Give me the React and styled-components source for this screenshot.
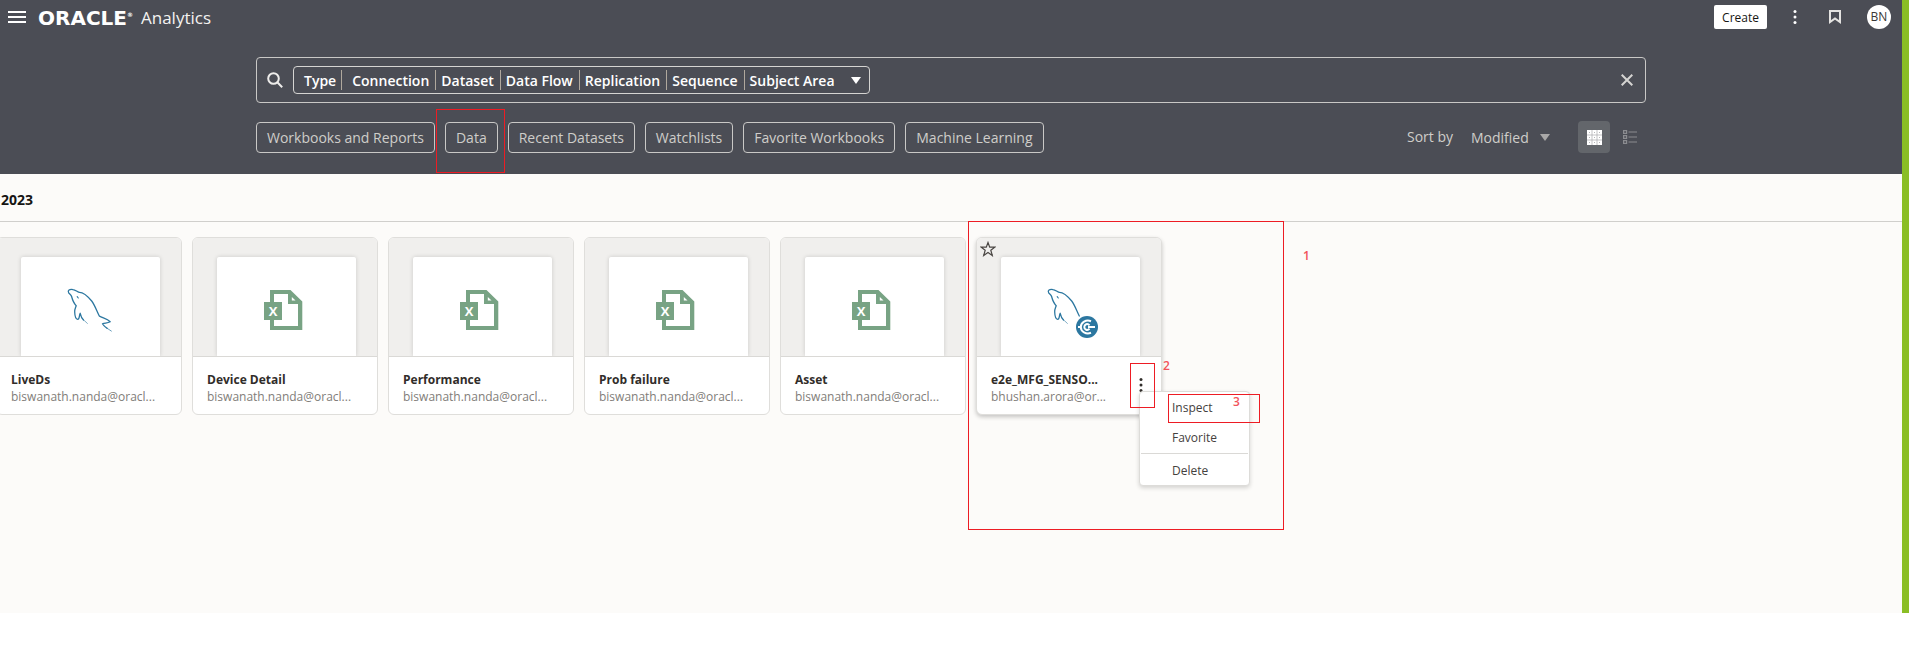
import React from 'react';
import styled, { createGlobalStyle, css } from 'styled-components';

const GlobalStyle = createGlobalStyle`
  * { box-sizing: border-box; }
  body {
    margin: 0;
    background: #fff;
    color: #161513;
    font: 12px/18px "Open Sans", "Noto Sans", sans-serif;
  }
  button, input, select { font: inherit; color: inherit; }
`;

const Page = styled.div`
  margin-right: 8px;
  border-right: 7px solid #8abe25;
  background: #fcfbf9;
  overflow: hidden;
`;

const Header = styled.header`
  background: #4b4d55;
  color: #fff;
  padding-bottom: 21px;
`;

const TopBar = styled.div`
  display: flex;
  align-items: center;
  justify-content: space-between;
  height: 34px;
  padding: 0 11px 0 8px;
`;

const Brand = styled.div`
  display: flex;
  align-items: center;
`;

const Wordmark = styled.span`
  margin-left: 12px;
  padding-top: 2px;
  font: bold 20px/24px "DejaVu Sans", sans-serif;
`;

const Registered = styled.sup`
  font-size: 6px;
  line-height: 6px;
  vertical-align: 8px;
`;

const Product = styled.span`
  margin-left: 8px;
  padding-top: 2px;
  font-size: 17px;
  line-height: 24px;
  color: #f4f3f1;
`;

const TopActions = styled.div`
  display: flex;
  align-items: center;
`;

const IconButton = styled.button`
  display: flex;
  align-items: center;
  justify-content: center;
  flex: none;
  width: ${(p) => p.$size || 24}px;
  height: ${(p) => p.$size || 24}px;
  padding: 0;
  border: 0;
  border-radius: 4px;
  color: ${(p) => p.$color || '#fff'};
  background: ${(p) => (p.$active ? '#63666b' : 'transparent')};
`;

const CreateButton = styled.button`
  height: 24px;
  padding: 2px 8px 0;
  border: 0;
  border-radius: 2px;
  background: #fff;
  color: #161513;
`;

const Tools = styled.div`
  display: flex;
  align-items: center;
  gap: 16px;
  margin: 0 20px 0 16px;
`;

const Avatar = styled.button`
  width: 24px;
  height: 24px;
  padding: 0;
  border: 0;
  border-radius: 50%;
  background: #fff;
  color: #3a3836;
`;

const Centered = styled.div`
  width: calc(100% - 512px);
  min-width: 1180px;
  margin: 23px auto 0;
`;

const SearchBar = styled.div`
  display: flex;
  align-items: center;
  height: 46px;
  padding: 0 6px 0 10px;
  border: 1px solid #c9c8c6;
  border-radius: 4px;
`;

const FilterChip = styled.button`
  display: flex;
  align-items: center;
  height: 28px;
  margin-left: 10px;
  padding: 0 8px 0 10px;
  border: 1px solid #d5d4d2;
  border-radius: 4px;
  background: transparent;
  font-size: 14px;
  font-weight: 600;
  color: #fff;
`;

const Facet = styled.span`
  display: flex;
  align-items: center;
  height: 20px;
  padding: 2px 6px 0 5px;
  border-left: 1px solid #b0a89d;
  &:first-child { padding-left: 0; padding-right: 5px; border-left: 0; }
  &:nth-child(2) { padding-left: 10px; }
  &:last-of-type { padding-right: 16px; }
`;

const SearchInput = styled.input`
  flex: 1;
  min-width: 0;
  height: 28px;
  padding: 0 8px;
  border: 0;
  outline: 0;
  background: transparent;
  font-size: 14px;
`;

const ToolRow = styled.div`
  display: flex;
  align-items: center;
  justify-content: space-between;
  margin-top: 18px;
  height: 32px;
`;

const Pills = styled.div`
  display: flex;
  gap: 10px;
`;

const Pill = styled.button`
  position: relative;
  height: 31px;
  padding: 2px 10px 0;
  border: 1px solid #c9c8c6;
  border-radius: 4px;
  background: transparent;
  font-size: 14px;
  color: #cfcdca;
  white-space: nowrap;
`;

const ViewTools = styled.div`
  display: flex;
  align-items: center;
  color: #cfcdca;
  font-size: 14px;
`;

const SortLabel = styled.label`
  margin-right: 18px;
`;

const SortSelect = styled.select`
  appearance: none;
  width: 69px;
  padding: 2px 0 0;
  border: 0;
  background: transparent;
`;

const Views = styled.div`
  display: flex;
  align-items: center;
  gap: 4px;
  margin-left: 28px;
`;

const SectionTitle = styled.h2`
  margin: 0;
  padding: 16px 1px 11px;
  border-bottom: 1px solid #d0cfcc;
  font-size: 14px;
  line-height: 20px;
  font-weight: 700;
`;

const Cards = styled.div`
  display: flex;
  gap: 10px;
  margin-left: -4px;
  padding: 15px 0 198px;
`;

const CardBox = styled.article`
  position: relative;
  flex: none;
  width: 186px;
  height: 178px;
  border: 1px solid #dfdedb;
  border-radius: 6px;
  background: #fff;
  ${(p) => p.$raised && css`box-shadow: 0 2px 4px rgba(0, 0, 0, 0.22);`}
`;

const Preview = styled.div`
  display: flex;
  justify-content: center;
  height: 119px;
  padding: 19px 0 0 2px;
  border-bottom: 1px solid #dad9d6;
  border-radius: 5px 5px 0 0;
  background: #f0efed;
  overflow: hidden;
`;

const Sheet = styled.div`
  display: flex;
  justify-content: center;
  width: 139px;
  padding-top: 29px;
  border-radius: 2px 2px 0 0;
  background: #fff;
  box-shadow: 0 0 4px rgba(0, 0, 0, 0.16);
`;

const Caption = styled.div`
  padding: 14px 14px 0;
`;

const CardTitle = styled.h3`
  margin: 0;
  font-size: 12px;
  line-height: 18px;
  font-weight: 700;
  color: #312d2a;
`;

const Owner = styled.p`
  margin: 0;
  line-height: 16px;
  color: #817d79;
`;

const StarButton = styled(IconButton)`
  position: absolute;
  left: -1px;
  top: -1px;
`;

const MoreButton = styled(IconButton)`
  position: absolute;
  left: 152px;
  top: 135px;
`;

const Menu = styled.div`
  position: absolute;
  left: 162px;
  top: 153px;
  width: 111px;
  border: 1px solid #dddcd9;
  border-radius: 4px;
  background: #fff;
  box-shadow: 0 2px 4px rgba(0, 0, 0, 0.16);
`;

const MenuItem = styled.button`
  display: block;
  width: 100%;
  height: 30px;
  padding: 2px 0 0 32px;
  border: 0;
  background: transparent;
  color: #45413e;
  text-align: left;
`;

const MenuRule = styled.hr`
  margin: 1px 1px;
  border: 0;
  border-top: 1px solid #dad9d6;
`;

const Callout = styled.span`
  position: absolute;
  left: ${(p) => p.$x}px;
  top: ${(p) => p.$y}px;
  width: ${(p) => p.$w}px;
  height: ${(p) => p.$h}px;
  border: 1px solid #ed1c24;
  pointer-events: none;
`;

const Step = styled.span`
  position: absolute;
  left: ${(p) => p.$x}px;
  top: ${(p) => p.$y}px;
  font-weight: 600;
  color: #f2525a;
`;

const Caret = ({ color = 'currentColor' }) => (
  <svg width="10" height="7" viewBox="0 0 10 7" fill={color} aria-hidden="true">
    <path d="M0 0H10L5 7Z" />
  </svg>
);

const Dots = () => (
  <svg width="4" height="14" viewBox="0 0 4 14" fill="currentColor" aria-hidden="true">
    <circle cx="2" cy="1.500" r="1.500" />
    <circle cx="2" cy="7" r="1.500" />
    <circle cx="2" cy="12.500" r="1.500" />
  </svg>
);

const Dolphin = ({ synced }) => (
  <svg width="48" height="48" viewBox="0 0 48 48" fill="none" stroke="#2c77a0" overflow="visible" aria-hidden="true">
    <path
      strokeWidth="1.3"
      strokeLinecap="round"
      strokeLinejoin="round"
      d="M13.3 6.3C17 6.2 21 9.3 25.7 15C28.5 18.5 31 25.5 33.3 30M13.3 6.3C11 5.800 9.500 3.800 7 3.600C3.500 2.900 1.300 4.500 2.700 6.900C3.800 8.500 5 8.500 5.600 10.500C6.500 14 8 17.500 10.200 19.700C9.500 22 8.500 23 8.700 26C8.800 29 9.300 33 11.700 33.300C13.700 33.300 13 29.500 14.200 27.300C14.800 30 16 32.500 17.500 34"
    />
    <path strokeWidth=".6" d="M17.300 33.600L21.700 37.700" />
    <path strokeWidth="1.1" strokeLinecap="round" d="M11.200 10.700L12.300 12" />
    {synced ? (
      <g>
        <circle cx="41" cy="41" r="11" fill="#2c77a0" stroke="none" />
        <g stroke="#fff" strokeWidth="2">
          <path d="M45 35.200C40 33.300 34.800 36.300 34.800 41S40 48.700 45 46.800" />
          <path d="M43.500 39.300C41.500 36.800 38.300 38.300 38.300 41S41.500 45.200 43.500 42.700" />
          <path d="M42 41H49M32 41H35" />
        </g>
      </g>
    ) : (
      <g>
        <path strokeWidth="1.300" strokeLinejoin="round" d="M33.300 30C36.500 32 41 32.500 44.200 35.700C41.500 37.300 39 36.800 36.500 37.800C37.500 40 39.500 41.300 41.500 42.600" />
        <path strokeWidth=".7" d="M41 42.200L45.700 45.300" />
      </g>
    )}
  </svg>
);

const SheetText = styled.text`
  font: bold 13px "Open Sans", sans-serif;
`;

const Excel = () => (
  <svg width="48" height="48" viewBox="0 0 48 48" aria-hidden="true">
    <path fill="#78a384" fillRule="evenodd" d="M8 4H28.500L40.300 15.500V44H8ZM12 8V40H36V18H26V8Z" />
    <path fill="#fff" d="M29.800 11L33.500 14.600H29.800Z" />
    <rect x="2" y="16" width="18" height="18" fill="#78a384" />
    <SheetText x="11" y="29.500" textAnchor="middle" fill="#fff">X</SheetText>
  </svg>
);

const cards = [
  { title: 'LiveDs', owner: 'biswanath.nanda@oracl...', kind: 'mysql' },
  { title: 'Device Detail', owner: 'biswanath.nanda@oracl...', kind: 'excel' },
  { title: 'Performance', owner: 'biswanath.nanda@oracl...', kind: 'excel' },
  { title: 'Prob failure', owner: 'biswanath.nanda@oracl...', kind: 'excel' },
  { title: 'Asset', owner: 'biswanath.nanda@oracl...', kind: 'excel' },
  { title: 'e2e_MFG_SENSO...', owner: 'bhushan.arora@or...', kind: 'synced', open: true },
];

const facets = ['Type', 'Connection', 'Dataset', 'Data Flow', 'Replication', 'Sequence', 'Subject Area'];
const pills = ['Workbooks and Reports', 'Data', 'Recent Datasets', 'Watchlists', 'Favorite Workbooks', 'Machine Learning'];

const Card = ({ title, owner, kind, open }) => (
  <CardBox $raised={open}>
    <Preview>
      <Sheet>{kind === 'excel' ? <Excel /> : <Dolphin synced={kind === 'synced'} />}</Sheet>
    </Preview>
    <Caption>
      <CardTitle>{title}</CardTitle>
      <Owner>{owner}</Owner>
    </Caption>
    {open && (
      <>
        <StarButton $color="#4a4643" aria-label="Favorite">
          <svg width="16" height="16" viewBox="0 0 16 16" fill="none" stroke="currentColor" strokeWidth="1.200" aria-hidden="true">
            <path d="M8 1.500L9.700 6.100H14.800L10.800 9.200L12.300 14.500L8 11.500L3.700 14.500L5.200 9.200L1.200 6.100H6.300Z" />
          </svg>
        </StarButton>
        <MoreButton $color="#312d2a" aria-label="Actions"><Dots /></MoreButton>
        <Menu>
          <MenuItem>Inspect</MenuItem>
          <MenuItem>Favorite</MenuItem>
          <MenuRule />
          <MenuItem>Delete</MenuItem>
          <Callout $x={28} $y={2} $w={92} $h={29} />
          <Step $x={93} $y={1}>3</Step>
        </Menu>
        <Callout $x={153} $y={125} $w={25} $h={45} />
        <Step $x={186} $y={119}>2</Step>
        <Callout $x={-9} $y={-17} $w={316} $h={309} />
        <Step $x={326} $y={9}>1</Step>
      </>
    )}
  </CardBox>
);

export default function App() {
  return (
    <>
      <GlobalStyle />
      <Page>
        <Header>
          <TopBar>
            <Brand>
              <IconButton $size={18} aria-label="Navigation">
                <svg width="18" height="12" viewBox="0 0 18 12" fill="currentColor" aria-hidden="true">
                  <path d="M0 0H18V2H0ZM0 5H18V7H0ZM0 10H18V12H0Z" />
                </svg>
              </IconButton>
              <Wordmark>ORACLE<Registered>®</Registered></Wordmark>
              <Product>Analytics</Product>
            </Brand>
            <TopActions>
              <CreateButton>Create</CreateButton>
              <Tools>
                <IconButton aria-label="Page menu"><Dots /></IconButton>
                <IconButton aria-label="Bookmarks">
                  <svg width="12" height="14" viewBox="0 0 12 14" fill="none" stroke="#e4e3e1" strokeWidth="2" aria-hidden="true">
                    <path d="M1 1H11V12L6 8.500L1 12Z" />
                  </svg>
                </IconButton>
              </Tools>
              <Avatar>BN</Avatar>
            </TopActions>
          </TopBar>
          <Centered>
            <SearchBar>
              <svg width="16" height="16" viewBox="0 0 16 16" fill="none" stroke="#eeedeb" strokeWidth="2" aria-hidden="true">
                <circle cx="6.500" cy="6.500" r="5.300" />
                <path d="M10.300 10.300L15.200 15.200" />
              </svg>
              <FilterChip>
                {facets.map((f) => <Facet key={f}>{f}</Facet>)}
                <Caret />
              </FilterChip>
              <SearchInput aria-label="Search" />
              <IconButton $color="#d5d4d2" aria-label="Clear search">
                <svg width="12" height="12" viewBox="0 0 12 12" stroke="currentColor" strokeWidth="2" aria-hidden="true">
                  <path d="M.7 .7L11.300 11.300M11.300 .7L.7 11.300" />
                </svg>
              </IconButton>
            </SearchBar>
            <ToolRow>
              <Pills>
                {pills.map((p) => (
                  <Pill key={p}>
                    {p}
                    {p === 'Data' && <Callout $x={-10} $y={-14} $w={69} $h={64} />}
                  </Pill>
                ))}
              </Pills>
              <ViewTools>
                <SortLabel htmlFor="sort">Sort by</SortLabel>
                <SortSelect id="sort"><option>Modified</option></SortSelect>
                <Caret color="#a9a8a8" />
                <Views>
                  <IconButton $size={32} $active aria-label="Grid view">
                    <svg width="15" height="15" viewBox="0 0 15 15" aria-hidden="true">
                      <path fill="#fff" d="M0 0H15V15H0Z" />
                      <path stroke="#a9aaac" fill="none" d="M5 0V15M10 0V15M0 5H15M0 10H15" strokeWidth=".7" />
                      <path fill="#b5b6b8" d="M2 2h1v1h-1zM7 2h1v1h-1zM12 2h1v1h-1zM2 7h1v1h-1zM7 7h1v1h-1zM12 7h1v1h-1zM2 12h1v1h-1zM7 12h1v1h-1zM12 12h1v1h-1z" />
                    </svg>
                  </IconButton>
                  <IconButton $size={32} $color="#8b8c90" aria-label="List view">
                    <svg width="14" height="14" viewBox="0 0 14 14" fill="none" stroke="currentColor" strokeWidth="1.200" aria-hidden="true">
                      <path d="M.6 .6H3.600V3.400H.6ZM.6 5.600H3.600V8.400H.6ZM.6 10.600H3.600V13.400H.6ZM5.500 2H14M5.500 7H14M5.500 12H14" />
                    </svg>
                  </IconButton>
                </Views>
              </ViewTools>
            </ToolRow>
          </Centered>
        </Header>
        <main>
          <SectionTitle>2023</SectionTitle>
          <Cards>
            {cards.map((c) => <Card key={c.title} {...c} />)}
          </Cards>
        </main>
      </Page>
    </>
  );
}
